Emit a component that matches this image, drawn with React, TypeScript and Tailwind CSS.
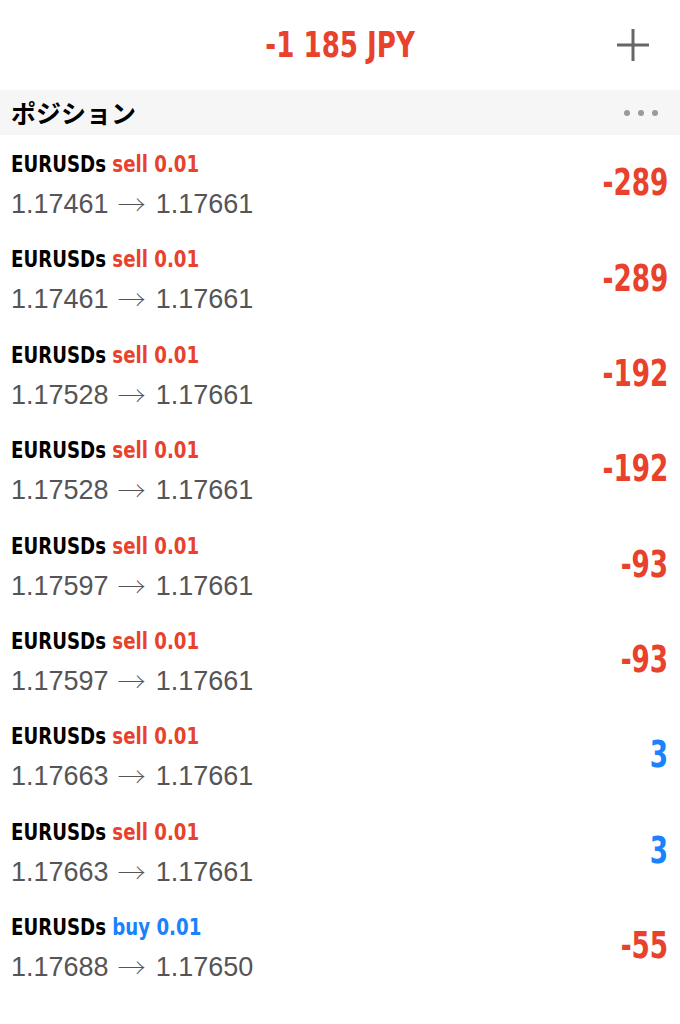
import React from "react";

type Position = {
  side: "sell" | "buy";
  open: string;
  close: string;
  profit: number;
};

const positions: Position[] = [
  { side: "sell", open: "1.17461", close: "1.17661", profit: -289 },
  { side: "sell", open: "1.17461", close: "1.17661", profit: -289 },
  { side: "sell", open: "1.17528", close: "1.17661", profit: -192 },
  { side: "sell", open: "1.17528", close: "1.17661", profit: -192 },
  { side: "sell", open: "1.17597", close: "1.17661", profit: -93 },
  { side: "sell", open: "1.17597", close: "1.17661", profit: -93 },
  { side: "sell", open: "1.17663", close: "1.17661", profit: 3 },
  { side: "sell", open: "1.17663", close: "1.17661", profit: 3 },
  { side: "buy", open: "1.17688", close: "1.17650", profit: -55 },
];

// condensed bold, squeezed a bit more to get close to the iOS condensed face
const narrow =
  "font-['Liberation_Sans_Narrow','DejaVu_Sans_Condensed','Liberation_Sans',sans-serif] [font-stretch:condensed] font-bold";

const PositionRow = ({ p }: { p: Position }) => {
  return (
    <div className="flex h-[95.375px] items-center justify-between pl-[11px] pr-[12px]">
      <div className="flex h-full flex-col pt-[9px]">
        <div
          className={`${narrow} inline-block origin-left scale-x-[0.86] whitespace-nowrap text-[23.5px] leading-[40px] text-black`}
        >
          EURUSDs{" "}
          <span className={p.side === "sell" ? "text-[#e8412c]" : "text-[#1a82fb]"}>
            {p.side} 0.01
          </span>
        </div>
        <div className="flex items-center whitespace-nowrap font-['Liberation_Sans',Arial,sans-serif] text-[27px] leading-[41px] text-[#555558]">
          <span>{p.open}</span>
          <span className="ml-[9px] mr-[10px] font-['Noto_Sans_CJK_JP',sans-serif] text-[28px] font-thin">
            →
          </span>
          <span>{p.close}</span>
        </div>
      </div>
      <div
        className={`${narrow} origin-right scale-x-[0.79] text-[37px] leading-none ${
          p.profit < 0 ? "text-[#e8412c]" : "text-[#1a82fb]"
        }`}
      >
        {p.profit}
      </div>
    </div>
  );
};

export default function App() {
  return (
    <div className="min-h-screen w-[680px] bg-white">
      {/* header */}
      <div className="grid h-[90px] grid-cols-[1fr_auto_1fr] items-center">
        <div />
        <div className={`${narrow} scale-x-[0.83] whitespace-nowrap text-[35px] text-[#e8412c]`}>
          -1 185 JPY
        </div>
        <div className="flex justify-end pr-[31px]">
          <svg width="32" height="32" viewBox="0 0 32 32">
            <path d="M16 0V32M0 16H32" stroke="#666" strokeWidth="3" />
          </svg>
        </div>
      </div>

      {/* section */}
      <div className="flex h-[45px] items-center justify-between bg-[#f6f6f6] pl-[11px] pr-[22px]">
        <div className="font-['Noto_Sans_CJK_JP',sans-serif] text-[25px] font-bold text-black">
          ポジション
        </div>
        <div className="flex gap-[8px]">
          <span className="h-[6px] w-[6px] rounded-full bg-[#9a9a9e]" />
          <span className="h-[6px] w-[6px] rounded-full bg-[#9a9a9e]" />
          <span className="h-[6px] w-[6px] rounded-full bg-[#9a9a9e]" />
        </div>
      </div>

      {positions.map((p, i) => (
        <PositionRow key={i} p={p} />
      ))}
    </div>
  );
}
